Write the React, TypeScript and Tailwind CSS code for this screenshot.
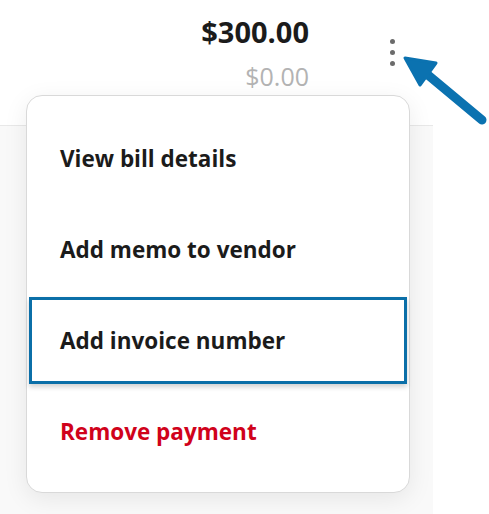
type Item = { label: string; danger?: boolean; focused?: boolean };

const items: Item[] = [
  { label: 'View bill details' },
  { label: 'Add memo to vendor' },
  { label: 'Add invoice number', focused: true },
  { label: 'Remove payment', danger: true },
];

function MenuItem({ item }: { item: Item }) {
  const color = item.danger ? 'text-[#d0021b]' : 'text-[#1b1b1b]';
  if (item.focused) {
    return (
      <div className="h-[91px] px-[2px] py-[2px] flex">
        <div className={`flex-1 flex items-center pl-[28px] border-[3px] border-[#0b6fa8] shadow-[0_3px_5px_rgba(0,0,0,0.18)] ${color}`}>
          {item.label}
        </div>
      </div>
    );
  }
  return (
    <div className={`h-[91px] flex items-center pl-[33px] ${color}`}>{item.label}</div>
  );
}

export default function App() {
  return (
    <div className="relative w-[489px] h-[514px] overflow-hidden bg-white font-['Open_Sans',sans-serif]">
      <div className="w-[433px] h-full flex flex-col">
        <div className="h-[125px] flex justify-end pr-[38px]">
          <div className="text-right pt-[13px]">
            <div className="text-[29px] leading-[37px] font-bold text-[#1b1b1b]">$300.00</div>
            <div className="mt-[10px] text-[25px] leading-[32px] text-[#b3b3b3]">$0.00</div>
          </div>
          <div className="ml-[81px] mt-[39px] flex flex-col gap-[6px]">
            <span className="block w-[5px] h-[5px] rounded-full bg-[#6b6b6b]" />
            <span className="block w-[5px] h-[5px] rounded-full bg-[#6b6b6b]" />
            <span className="block w-[5px] h-[5px] rounded-full bg-[#6b6b6b]" />
          </div>
        </div>
        <div className="flex-1 border-t border-[#e8e8e8] bg-[#f9f9f9]" />
      </div>

      <div className="absolute left-[26px] top-[95px] w-[384px] h-[398px] rounded-[16px] border border-[#d9d9d9] bg-white shadow-[0_6px_24px_rgba(0,0,0,0.08)] pt-[17px] text-[22.5px] font-bold">
        {items.map((item) => (
          <MenuItem key={item.label} item={item} />
        ))}
      </div>

      <svg className="absolute left-0 top-0 pointer-events-none" width="489" height="514" viewBox="0 0 489 514">
        <line x1="428" y1="75" x2="482" y2="120" stroke="#0b72b0" strokeWidth="9" strokeLinecap="round" />
        <polygon points="405,58 436,63 420,85" fill="#0b72b0" stroke="#0b72b0" strokeWidth="3" strokeLinejoin="round" />
      </svg>
    </div>
  );
}
